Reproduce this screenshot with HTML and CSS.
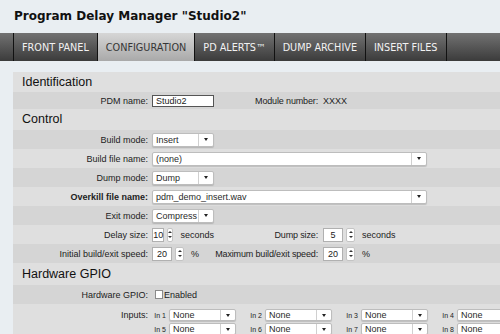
FILE: index.html
```html
<!DOCTYPE html>
<html lang="en">
<head>
    <meta charset="UTF-8">
    <title>Program Delay Manager</title>
    <link rel="stylesheet" href="styles.css">
</head>
<body>

    <h1 class="title">Program Delay Manager "Studio2"</h1>

    <!-- main navigation -->
    <nav class="tabs">
        <a class="tab">FRONT PANEL</a>
        <a class="tab active">CONFIGURATION</a>
        <a class="tab">PD ALERTS™</a>
        <a class="tab">DUMP ARCHIVE</a>
        <a class="tab">INSERT FILES</a>
    </nav>

    <div class="panel">
        <h2 class="section first">Identification</h2>
        <div class="row dark">
            <span class="label">PDM name:</span>
            <div class="cell"><span class="textbox">Studio2</span></div>
            <span class="label2">Module number:</span>
            <span class="value2">XXXX</span>
        </div>

        <h2 class="section">Control</h2>
        <div class="row dark">
            <span class="label">Build mode:</span>
            <div class="cell"><span class="select"><span class="sel-text">Insert</span><span class="sel-btn"></span></span></div>
        </div>
        <div class="row">
            <span class="label">Build file name:</span>
            <div class="cell wide"><span class="select long"><span class="sel-text">(none)</span><span class="sel-btn"></span></span></div>
        </div>
        <div class="row dark">
            <span class="label">Dump mode:</span>
            <div class="cell"><span class="select"><span class="sel-text">Dump</span><span class="sel-btn"></span></span></div>
        </div>
        <div class="row">
            <span class="label bold">Overkill file name:</span>
            <div class="cell wide"><span class="select long"><span class="sel-text">pdm_demo_insert.wav</span><span class="sel-btn"></span></span></div>
        </div>
        <div class="row dark">
            <span class="label">Exit mode:</span>
            <div class="cell"><span class="select"><span class="sel-text">Compress</span><span class="sel-btn"></span></span></div>
        </div>
        <div class="row">
            <span class="label">Delay size:</span>
            <div class="cell">
                <span class="num">10</span><span class="spin"><i class="up"></i><i class="down"></i></span>
                <span class="unit">seconds</span>
            </div>
            <span class="label2">Dump size:</span>
            <div class="value2">
                <span class="num">5</span><span class="spin"><i class="up"></i><i class="down"></i></span>
                <span class="unit">seconds</span>
            </div>
        </div>
        <div class="row dark">
            <span class="label">Initial build/exit speed:</span>
            <div class="cell">
                <span class="num">20</span><span class="spin"><i class="up"></i><i class="down"></i></span>
                <span class="unit">%</span>
            </div>
            <span class="label2">Maximum build/exit speed:</span>
            <div class="value2">
                <span class="num">20</span><span class="spin"><i class="up"></i><i class="down"></i></span>
                <span class="unit">%</span>
            </div>
        </div>

        <h2 class="section gpio-head">Hardware GPIO</h2>
        <div class="row dark">
            <span class="label">Hardware GPIO:</span>
            <div class="cell wide"><span class="check"></span><span class="check-text">Enabled</span></div>
        </div>
        <div class="row inputs">
            <span class="label">Inputs:</span>
            <div class="gpio">
                <div class="gpio-item"><span class="in">In 1</span><span class="select io"><span class="sel-text">None</span><span class="sel-btn"></span></span></div>
                <div class="gpio-item"><span class="in">In 2</span><span class="select io"><span class="sel-text">None</span><span class="sel-btn"></span></span></div>
                <div class="gpio-item"><span class="in">In 3</span><span class="select io"><span class="sel-text">None</span><span class="sel-btn"></span></span></div>
                <div class="gpio-item"><span class="in">In 4</span><span class="select io"><span class="sel-text">None</span><span class="sel-btn"></span></span></div>
                <div class="gpio-item"><span class="in">In 5</span><span class="select io"><span class="sel-text">None</span><span class="sel-btn"></span></span></div>
                <div class="gpio-item"><span class="in">In 6</span><span class="select io"><span class="sel-text">None</span><span class="sel-btn"></span></span></div>
                <div class="gpio-item"><span class="in">In 7</span><span class="select io"><span class="sel-text">None</span><span class="sel-btn"></span></span></div>
                <div class="gpio-item"><span class="in">In 8</span><span class="select io"><span class="sel-text">None</span><span class="sel-btn"></span></span></div>
            </div>
        </div>
    </div>

</body>
</html>
```

FILE: styles.css
```css
html, body {
    overflow: hidden;
}
body {
    margin: 0;
    width: 500px;
    height: 334px;
    background: #e9eef2;
    font-family: "Liberation Sans", Arial, sans-serif;
    color: #222;
}
.title {
    margin: 0;
    padding: 8px 14px 9px;
    font: bold 12px/16px "DejaVu Sans", Verdana, sans-serif;
    color: #111;
}

/* nav bar */
.tabs {
    display: flex;
    height: 28px;
    padding-left: 13px;
    background: linear-gradient(#727272, #3b3b3b);
}
.tab {
    display: flex;
    align-items: center;
    padding: 0 8px;
    border-left: 1px solid #111;
    font: 9.7px "DejaVu Sans", Verdana, sans-serif;
    color: #f2f2f2;
}
.tab:last-child {
    border-right: 1px solid #111;
}
.tab.active {
    background: linear-gradient(#d6d6d6, #a9a9a9);
    color: #363636;
}

/* content */
.panel {
    margin: 11px 0 0 13px;
    background: #dfdfdf;
    overflow: hidden;
}
.section {
    margin: 0;
    padding-left: 9px;
    font: 12.5px/21px "Liberation Sans", Arial, sans-serif;
    color: #111;
}
.section.first {
    line-height: 20px;
}
.section.gpio-head {
    line-height: 22px;
}
.row {
    display: flex;
    align-items: center;
    height: 19px;
    font-size: 9px;
    white-space: nowrap;
}
.row.dark {
    background: #d5d5d5;
}
.panel > .row:nth-of-type(1) {
    height: 17px;
}
.label {
    flex: none;
    width: 135px;
    margin-right: 4px;
    text-align: right;
}
.label.bold {
    font-weight: bold;
}
.cell {
    flex: none;
    width: 62px;
    display: flex;
    align-items: center;
}
.cell.wide {
    width: auto;
}
.label2 {
    flex: none;
    width: 104px;
    text-align: right;
    letter-spacing: -0.15px;
}
.value2 {
    margin-left: 5px;
    display: flex;
    align-items: center;
}

.textbox {
    box-sizing: border-box;
    width: 70px;
    height: 12px;
    padding-left: 3px;
    background: #fff;
    border: 1px solid #555;
    line-height: 10px;
}

.select {
    box-sizing: border-box;
    display: inline-flex;
    width: 70px;
    height: 14px;
    background: #fff;
    border: 1px solid #bdbdbd;
    border-radius: 2px;
    box-shadow: 0 1px 1px rgba(0, 0, 0, 0.15);
}
.select.long {
    width: 275px;
}
.sel-text {
    flex: 1;
    padding-left: 3px;
    line-height: 12px;
    color: #2a2a2a;
}
.sel-btn {
    width: 14px;
    border-left: 1px solid #d0d0d0;
    display: flex;
    align-items: center;
    justify-content: center;
}
.sel-btn::after {
    content: "";
    border-left: 2px solid transparent;
    border-right: 2px solid transparent;
    border-top: 3px solid #222;
}

.num {
    box-sizing: border-box;
    width: 20px;
    height: 14px;
    background: #fff;
    border: 1px solid #b0b0b0;
    text-align: center;
    line-height: 12px;
}
.spin {
    box-sizing: border-box;
    width: 9px;
    height: 14px;
    margin-left: 3px;
    background: #fff;
    border: 1px solid #c4c4c4;
    border-radius: 2px;
    display: flex;
    flex-direction: column;
    align-items: center;
    justify-content: space-evenly;
}
.spin .up {
    border-left: 2px solid transparent;
    border-right: 2px solid transparent;
    border-bottom: 2px solid #333;
}
.spin .down {
    border-left: 2px solid transparent;
    border-right: 2px solid transparent;
    border-top: 2px solid #333;
}
.unit {
    margin-left: 7px;
}

.check {
    box-sizing: border-box;
    width: 8px;
    height: 9px;
    margin-left: 3px;
    background: #fff;
    border: 1px solid #8a8a8a;
}
.check-text {
    margin-left: 1px;
}

.row.inputs {
    height: auto;
    align-items: flex-start;
    padding: 5px 0 4px;
}
.row.inputs .label {
    line-height: 13px;
}
.gpio {
    display: grid;
    grid-template-columns: repeat(4, 96px);
    margin-left: -4px;
    row-gap: 2px;
}
.gpio-item {
    display: flex;
    align-items: center;
}
.in {
    box-sizing: border-box;
    width: 21px;
    padding-right: 3px;
    text-align: right;
    font-size: 7px;
}
.select.io {
    width: 67px;
    height: 12px;
}
.select.io .sel-text {
    line-height: 10px;
}
```
